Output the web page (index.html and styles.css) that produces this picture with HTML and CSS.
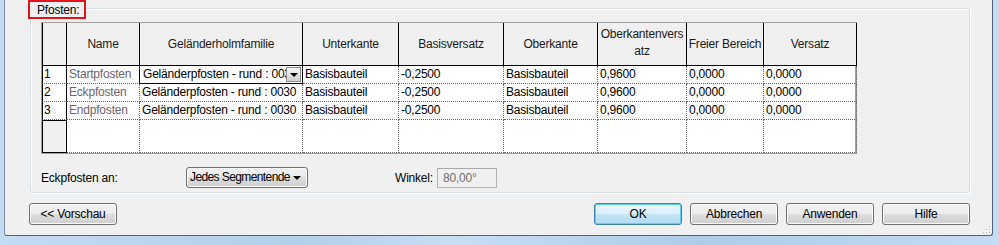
FILE: index.html
```html
<!DOCTYPE html>
<html lang="de">
<head>
  <meta charset="UTF-8">
  <title>Pfosten</title>
  <link rel="stylesheet" href="styles.css">
</head>
<body>

  <div class="dialog">
    <div class="group">
      <div class="group-title">Pfosten:</div>

      <div class="grid">
        <div class="row head">
          <div class="cell rh"></div>
          <div class="cell">Name</div>
          <div class="cell">Geländerholmfamilie</div>
          <div class="cell">Unterkante</div>
          <div class="cell">Basisversatz</div>
          <div class="cell">Oberkante</div>
          <div class="cell two">Oberkantenvers<br>atz</div>
          <div class="cell">Freier Bereich</div>
          <div class="cell">Versatz</div>
        </div>
        <div class="row">
          <div class="cell rh">1</div>
          <div class="cell name">Startpfosten</div>
          <div class="cell sel">Geländerpfosten - rund : 0030<span class="cell-drop"><i></i></span></div>
          <div class="cell">Basisbauteil</div>
          <div class="cell">-0,2500</div>
          <div class="cell">Basisbauteil</div>
          <div class="cell">0,9600</div>
          <div class="cell">0,0000</div>
          <div class="cell">0,0000</div>
        </div>
        <div class="row">
          <div class="cell rh">2</div>
          <div class="cell name">Eckpfosten</div>
          <div class="cell">Geländerpfosten - rund : 0030</div>
          <div class="cell">Basisbauteil</div>
          <div class="cell">-0,2500</div>
          <div class="cell">Basisbauteil</div>
          <div class="cell">0,9600</div>
          <div class="cell">0,0000</div>
          <div class="cell">0,0000</div>
        </div>
        <div class="row">
          <div class="cell rh">3</div>
          <div class="cell name">Endpfosten</div>
          <div class="cell">Geländerpfosten - rund : 0030</div>
          <div class="cell">Basisbauteil</div>
          <div class="cell">-0,2500</div>
          <div class="cell">Basisbauteil</div>
          <div class="cell">0,9600</div>
          <div class="cell">0,0000</div>
          <div class="cell">0,0000</div>
        </div>
        <div class="row empty">
          <div class="cell rh"></div>
          <div class="cell"></div>
          <div class="cell"></div>
          <div class="cell"></div>
          <div class="cell"></div>
          <div class="cell"></div>
          <div class="cell"></div>
          <div class="cell"></div>
          <div class="cell"></div>
        </div>
      </div>

      <div class="options">
        <span class="lbl">Eckpfosten an:</span>
        <div class="combo">Jedes Segmentende<i></i></div>
        <span class="lbl winkel">Winkel:</span>
        <div class="textbox">80,00°</div>
      </div>
    </div>

    <div class="buttons">
      <button>&lt;&lt; Vorschau</button>
      <span class="spacer"></span>
      <button class="default">OK</button>
      <button>Abbrechen</button>
      <button>Anwenden</button>
      <button>Hilfe</button>
    </div>

    <svg class="grip" width="9" height="9" viewBox="0 0 9 9">
      <rect x="7" y="1" width="1" height="1" fill="#b5b5b5"/>
      <rect x="4" y="4" width="1" height="1" fill="#b5b5b5"/>
      <rect x="7" y="4" width="1" height="1" fill="#b5b5b5"/>
      <rect x="1" y="7" width="1" height="1" fill="#b5b5b5"/>
      <rect x="4" y="7" width="1" height="1" fill="#b5b5b5"/>
      <rect x="7" y="7" width="1" height="1" fill="#b5b5b5"/>
    </svg>
  </div>

</body>
</html>
```

FILE: styles.css
```css
body {
  margin: 0;
  height: 245px;
  overflow: hidden;
  background: linear-gradient(90deg, #c3dbf3 0%, #b4cfe9 30%, #c8def4 45%, #aecbe8 70%, #c4dcf3 100%);
  font-family: "Liberation Sans", Arial, sans-serif;
  font-size: 12px;
  letter-spacing: -0.2px;
  color: #000;
}

.dialog {
  position: relative;
  margin: 0 6px 0 4px;
  height: 236px;
  box-sizing: border-box;
  background: #f0f0f0;
  border-left: 1px solid #7a8da2;
  border-right: 1px solid #4f6277;
  border-bottom: 1px solid #4f6277;
  border-radius: 0 0 3px 3px;
  padding-top: 8px;
}

/* group box */
.group {
  position: relative;
  margin-left: 25px;
  width: 940px;
  height: 185px;
  box-sizing: border-box;
  border: 1px solid #d5dfe5;
  border-radius: 3px;
  box-shadow: inset 1px 1px 0 #fff, 1px 1px 0 #fff;
  padding: 13px 0 0 10px;
}

.group-title {
  position: absolute;
  left: -3px;
  top: -9px;
  width: 58px;
  height: 19px;
  box-sizing: border-box;
  border: 2px solid #e3141b;
  background: #f0f0f0;
  padding: 1px 0 0 7px;
  line-height: 14px;
}

/* grid */
.grid {
  width: 816px;
  height: 132px;
  box-sizing: border-box;
  border: 1px solid #a0a0a0;
  border-right-width: 2px;
  background: #fff;
}

.row {
  display: grid;
  grid-template-columns: 25px 73px 163px 96px 105px 94px 89px 77px 93px;
  height: 18px;
}

.cell {
  box-sizing: border-box;
  border-right: 1px dotted #6a6a6a;
  border-bottom: 1px dotted #6a6a6a;
  padding: 0 2px;
  line-height: 17px;
  white-space: nowrap;
  overflow: hidden;
}

.cell.rh {
  border-left: 1px solid #000;
  border-right: 1px solid #000;
  padding-left: 1px;
}

.cell.name {
  color: #6c666f;
}

.cell.sel {
  position: relative;
  border: 1px solid #000;
  margin-left: -1px;
  margin-top: -1px;
  padding-left: 3px;
  padding-right: 18px;
  height: 19px;
}

.cell-drop {
  position: absolute;
  right: 1px;
  top: 1px;
  width: 15px;
  height: 15px;
  box-sizing: border-box;
  border: 1px solid #8a8a8a;
  background: linear-gradient(#f6f6f6, #e2e2e2 50%, #d0d0d0);
}

.cell-drop i {
  position: absolute;
  left: 3px;
  top: 5px;
  border-left: 4px solid transparent;
  border-right: 4px solid transparent;
  border-top: 4px solid #000;
}

.row.head {
  height: 43px;
}

.row.head .cell {
  background: #f0f0f0;
  border-right: 1px solid #000;
  border-bottom: 1px solid #000;
  display: flex;
  align-items: center;
  justify-content: center;
  text-align: center;
  padding: 0;
  color: #1a1a1a;
}

.row.head .cell.rh {
  border-left: 1px solid #000;
}

.row.head .cell.two {
  line-height: 17px;
  padding-bottom: 3px;
}

.row.empty {
  height: 33px;
}

.row.empty .cell.rh {
  background: #f0f0f0;
  border-top: 1px solid #000;
  border-bottom: 1px solid #000;
}

/* options line */
.options {
  display: flex;
  align-items: center;
  margin-top: 13px;
  height: 21px;
}

.lbl {
  width: 145px;
}

.lbl.winkel {
  width: auto;
  margin: 0 4px 0 87px;
}

.combo {
  position: relative;
  width: 122px;
  height: 21px;
  box-sizing: border-box;
  border: 1px solid #707070;
  border-radius: 3px;
  background: linear-gradient(#f2f2f2 0%, #ebebeb 50%, #dddddd 50%, #cfcfcf 100%);
  box-shadow: inset 0 0 0 1px #fbfbfb;
  padding-left: 3px;
  line-height: 19px;
  letter-spacing: -0.6px;
}

.combo i {
  position: absolute;
  right: 6px;
  top: 8px;
  border-left: 4px solid transparent;
  border-right: 4px solid transparent;
  border-top: 4px solid #000;
}

.textbox {
  width: 60px;
  height: 20px;
  box-sizing: border-box;
  border: 1px solid #b4b4b4;
  border-top-color: #a8a8a8;
  background: #f0f0f0;
  color: #6d6d6d;
  padding-left: 5px;
  line-height: 18px;
}

/* buttons */
.buttons {
  display: flex;
  gap: 8px;
  margin: 10px 22px 0 24px;
}

.spacer {
  flex: 1;
}

button {
  width: 88px;
  height: 22px;
  border: 1px solid #707070;
  border-radius: 3px;
  background: linear-gradient(#f2f2f2 0%, #ebebeb 50%, #dddddd 50%, #cfcfcf 100%);
  box-shadow: inset 0 0 0 1px #fbfbfb;
  font-family: inherit;
  font-size: 12px;
  letter-spacing: -0.2px;
  color: #000;
  padding: 0;
}

button.default {
  border-color: #3c7fb1;
  background: linear-gradient(#e9f5fc 0%, #dcf0fb 50%, #c4e5f6 50%, #b3dcf2 100%);
  box-shadow: inset 0 0 0 1px #5fd0f5;
}

.grip {
  position: absolute;
  right: 1px;
  bottom: 1px;
}
```
